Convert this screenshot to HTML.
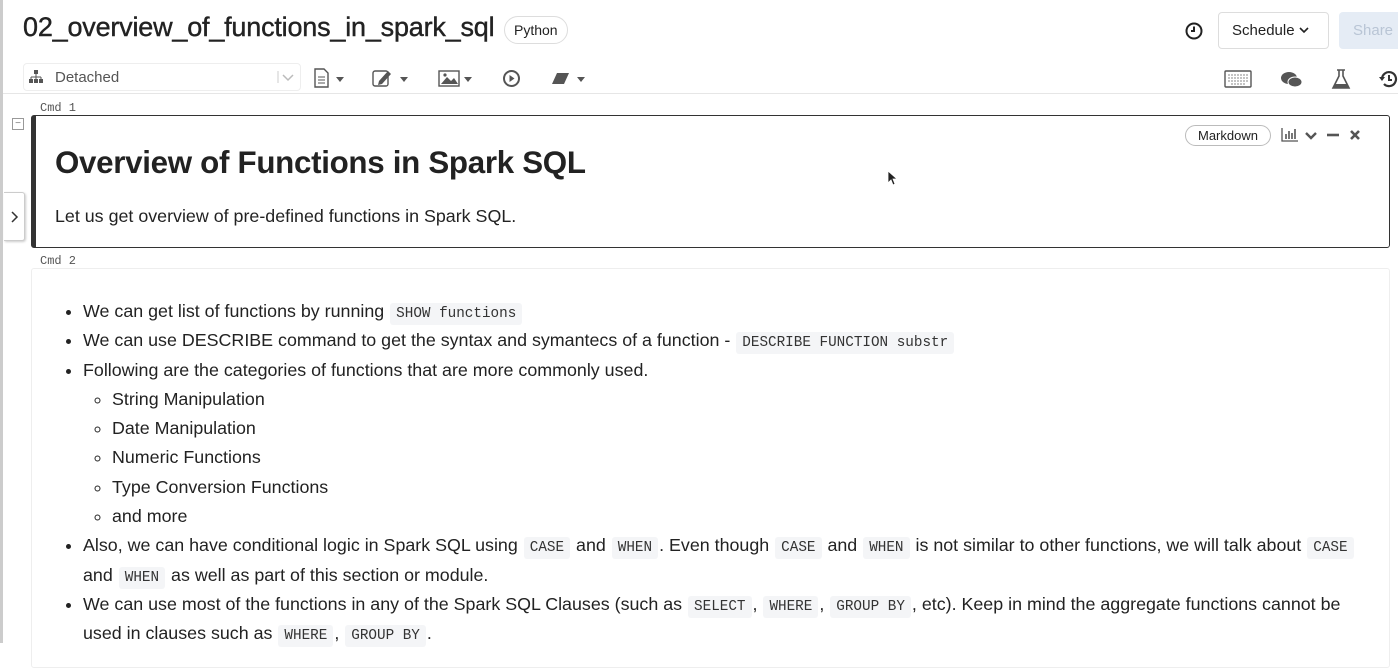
<!DOCTYPE html>
<html><head><meta charset="utf-8"><style>
*{box-sizing:border-box;margin:0;padding:0}
body{width:1398px;height:643px;overflow:hidden;background:#fff;font-family:"Liberation Sans",sans-serif;color:#222;position:relative}
.abs{position:absolute}
.title{left:23px;top:12px;font-size:27px;color:#222;letter-spacing:-0.2px;-webkit-text-stroke:0.4px #222}
.pill{border:1px solid #ddd;border-radius:14px;font-size:14px;padding:0 9px;height:28px;line-height:26px}
.code{font-family:"Liberation Mono",monospace;font-size:14.3px;background:#f4f5f7;padding:3px 6px;border-radius:3px;color:#333;line-height:1;margin:0 1px}
.txt{font-size:17.85px;color:#222}
ul{list-style:disc}
li{line-height:29.3px;white-space:nowrap}
</style></head><body>
<div class="abs" style="left:0;top:0;width:3px;height:643px;background:#ccc"></div>
<div class="abs title">02_overview_of_functions_in_spark_sql</div>
<div class="abs pill" style="left:504px;top:16px">Python</div>

<svg class="abs" style="left:1184px;top:21px" width="20" height="20" viewBox="0 0 20 20"><circle cx="10" cy="10" r="7.5" fill="none" stroke="#222" stroke-width="2"/><path d="M10 5.5V10H7" fill="none" stroke="#222" stroke-width="2"/></svg>
<div class="abs" style="left:1218px;top:12px;width:111px;height:37px;border:1px solid #ddd;border-radius:4px;font-size:15px;line-height:35px;padding-left:13px">Schedule <svg width="10" height="8" style="vertical-align:1px"><path d="M1 2l4 4 4-4" stroke="#222" fill="none" stroke-width="1.6"/></svg></div>
<div class="abs" style="left:1339px;top:12px;width:70px;height:37px;background:#e5ecf5;border-radius:4px;font-size:15px;line-height:37px;padding-left:14px;color:#b9c5d5">Share</div>

<div class="abs" style="left:23px;top:63px;width:278px;height:28px;border:1px solid #eee;border-radius:4px"></div>
<svg class="abs" style="left:29px;top:70px" width="14" height="13" viewBox="0 0 14 13"><rect x="5" y="0" width="4" height="4" fill="#555"/><path d="M7 4v3M2 7h10M2 7v2M7 7v2M12 7v2" stroke="#555" fill="none"/><rect x="0" y="9" width="4" height="4" fill="#555"/><rect x="5" y="9" width="4" height="4" fill="#555"/><rect x="10" y="9" width="4" height="4" fill="#555"/></svg>
<div class="abs" style="left:55px;top:69px;font-size:15px;color:#555">Detached</div>
<div class="abs" style="left:277px;top:68px;width:20px;height:18px"><svg width="22" height="18"><path d="M1 3v12" stroke="#ccc"/><path d="M6 7l5 5 5-5" stroke="#bbb" fill="none" stroke-width="1.5"/></svg></div>
<svg class="abs" style="left:314px;top:68px" width="32" height="20"><path d="M1 1h9l4 4v14H1z" fill="none" stroke="#555" stroke-width="1.4"/><path d="M4 9h7M4 12h7M4 15h7" stroke="#555"/><path d="M22 9h8l-4 5z" fill="#555"/></svg>
<svg class="abs" style="left:372px;top:68px" width="38" height="20"><rect x="1" y="3" width="15" height="15" rx="2" fill="none" stroke="#555" stroke-width="1.4"/><path d="M7 13l9-10 3 3-9 10-4 1z" fill="#555"/><path d="M28 9h8l-4 5z" fill="#555"/></svg>
<svg class="abs" style="left:438px;top:68px" width="36" height="20"><rect x="1" y="3" width="20" height="15" fill="none" stroke="#555" stroke-width="1.4"/><path d="M3 16l6-7 4 4 3-3 4 6z" fill="#555"/><circle cx="7" cy="7" r="1.6" fill="#555"/><path d="M26 9h8l-4 5z" fill="#555"/></svg>
<svg class="abs" style="left:502px;top:69px" width="19" height="19"><circle cx="9.5" cy="9.5" r="7.5" fill="none" stroke="#555" stroke-width="2"/><path d="M7.5 6v7l5-3.5z" fill="#555"/></svg>
<svg class="abs" style="left:549px;top:69px" width="36" height="18"><path d="M3 15l5-11h12l-5 11z" fill="#555"/><path d="M28 8h8l-4 5z" fill="#555"/></svg>

<svg class="abs" style="left:1224px;top:70px" width="28" height="18"><rect x="1" y="1" width="26" height="16" rx="1" fill="none" stroke="#555" stroke-width="1.4"/><path d="M4 5h20M4 8h20M4 11h20M7 14h14" stroke="#888" stroke-dasharray="2 1"/></svg>
<svg class="abs" style="left:1280px;top:70px" width="24" height="20"><ellipse cx="9" cy="8" rx="8" ry="6" fill="#555"/><ellipse cx="15" cy="12" rx="7" ry="5" fill="#555" stroke="#fff"/></svg>
<svg class="abs" style="left:1331px;top:68px" width="20" height="22"><path d="M6 2h8M8 2v6L2 20h16L12 8V2" fill="none" stroke="#555" stroke-width="1.6"/><path d="M4 16h12l2 4H2z" fill="#555"/></svg>
<svg class="abs" style="left:1378px;top:69px" width="22" height="20"><path d="M4 10a7 7 0 1 1 2 5" fill="none" stroke="#333" stroke-width="2.2"/><path d="M1 8l3 4 3-4z" fill="#333"/><path d="M11 6v5h3" fill="none" stroke="#333" stroke-width="2"/></svg>

<div class="abs" style="left:3px;top:93px;width:1395px;height:1px;background:#e6e6e6"></div>
<div class="abs" style="left:40px;top:101px;font-family:'Liberation Mono',monospace;font-size:12px;color:#555">Cmd 1</div>
<div class="abs" style="left:12px;top:118px;width:12px;height:12px;border:1px solid #999;font-size:10px;line-height:9px;text-align:center;color:#777">&minus;</div>
<div class="abs" style="left:4px;top:192px;width:21px;height:49px;border:1px solid #ccc;border-left:none;border-radius:0 3px 3px 0;background:#fff;text-align:center;box-shadow:1px 1px 2px #ccc"><svg width="10" height="47"><path d="M3 19l5 5-5 5" stroke="#333" fill="none" stroke-width="1.5"/></svg></div>

<div class="abs" style="left:31px;top:115px;width:1359px;height:133px;border:1px solid #333;border-left:5px solid #333;border-radius:3px"></div>
<div class="abs" style="left:55px;top:145px;font-size:31.3px;font-weight:bold;color:#222;letter-spacing:-0.3px">Overview of Functions in Spark SQL</div>
<div class="abs txt" style="left:55px;top:206px">Let us get overview of pre-defined functions in Spark SQL.</div>
<div class="abs pill" style="left:1185px;top:125px;height:21px;line-height:19px;font-size:13px;padding:0 12px;border-color:#bbb">Markdown</div>
<svg class="abs" style="left:1281px;top:127px" width="80" height="16"><path d="M1 1v13h16" stroke="#555" fill="none" stroke-width="1.3"/><path d="M5 12V7M8 12V4M11 12V6M14 12V2" stroke="#555" stroke-width="1.6"/><path d="M25 6l5 5 5-5" stroke="#555" fill="none" stroke-width="2.4"/><path d="M46 8h12" stroke="#555" stroke-width="2.6"/><path d="M70 4l8 8M78 4l-8 8" stroke="#555" stroke-width="2.6"/></svg>
<svg class="abs" style="left:887px;top:170px" width="10" height="16"><path d="M1 1v12l3-3 2 5 2-1-2-5h4z" fill="#222" stroke="#fff" stroke-width="0.8"/></svg>

<div class="abs" style="left:40px;top:254px;font-family:'Liberation Mono',monospace;font-size:12px;color:#555">Cmd 2</div>
<div class="abs" style="left:31px;top:268px;width:1359px;height:400px;border:1px solid #eee;border-radius:3px"></div>

<div class="abs txt" style="left:83px;top:297px;width:1300px">
<ul>
<li>We can get list of functions by running <span class="code">SHOW functions</span></li>
<li>We can use DESCRIBE command to get the syntax and symantecs of a function - <span class="code">DESCRIBE FUNCTION substr</span></li>
<li>Following are the categories of functions that are more commonly used.
<ul style="list-style:circle;margin-left:29px">
<li>String Manipulation</li><li>Date Manipulation</li><li>Numeric Functions</li><li>Type Conversion Functions</li><li>and more</li></ul></li>
<li>Also, we can have conditional logic in Spark SQL using <span class="code">CASE</span> and <span class="code">WHEN</span>. Even though <span class="code">CASE</span> and <span class="code">WHEN</span> is not similar to other functions, we will talk about <span class="code">CASE</span><br>and <span class="code">WHEN</span> as well as part of this section or module.</li>
<li>We can use most of the functions in any of the Spark SQL Clauses (such as <span class="code">SELECT</span>, <span class="code">WHERE</span>, <span class="code">GROUP BY</span>, etc). Keep in mind the aggregate functions cannot be<br>used in clauses such as <span class="code">WHERE</span>, <span class="code">GROUP BY</span>.</li>
</ul></div>
</body></html>
